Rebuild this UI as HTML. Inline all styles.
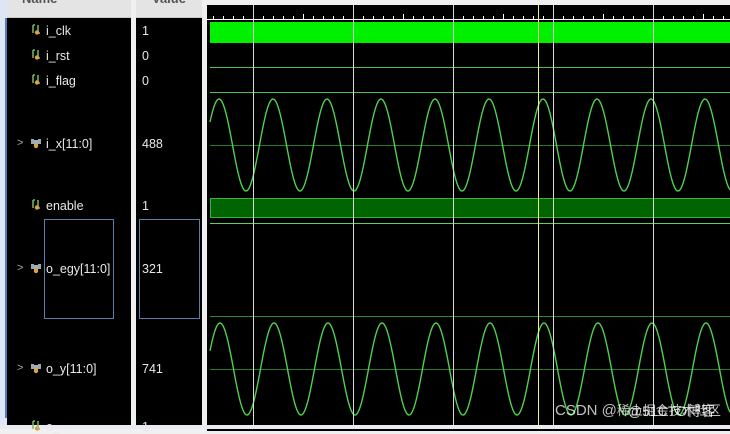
<!DOCTYPE html>
<html><head><meta charset="utf-8"><style>
body{margin:0;width:730px;height:429px;overflow:hidden;background:#f0f0f0;font-family:"Liberation Sans",sans-serif;position:relative}
.strip{position:absolute;left:0;top:0;width:7px;height:429px;background:#dde6f2}
.strip:after{content:"";position:absolute;left:5px;top:18px;width:2px;height:400px;background:#4f7cc0}
.col{position:absolute;top:0;height:426px;background:#000}
.hdr{position:absolute;top:0;height:17px;background:#e4e4e4;border-bottom:1px solid #c8c8c8;overflow:hidden}
.hdr span{position:absolute;top:-9px;font-size:13px;font-weight:bold;color:#555}
.t{position:absolute;color:#e8e8e8;font-size:12.5px;line-height:14px}
.ic{position:absolute;width:10px;height:11px}
.arr{position:absolute;color:#aaa;font-size:11px}
.box{position:absolute;border:1px solid #5a7fa6}
</style></head><body>
<div class="strip"></div>
<div class="col" style="left:7px;width:124px"></div>
<div class="hdr" style="left:7px;width:124px"><span style="left:15px">Name</span></div>
<div class="col" style="left:136px;width:66px"></div>
<div class="hdr" style="left:136px;width:66px"><span style="left:16px">Value</span></div>
<div class="col" style="left:207px;width:523px;top:5px"></div>
<div style="position:absolute;left:0;top:425px;width:730px;height:4px;background:#e8ecf2"></div>

<div id="names"></div>
<div class="box" style="left:44px;top:219px;width:68px;height:98px"></div>
<div class="box" style="left:139px;top:219px;width:59px;height:98px"></div>

<svg style="position:absolute;left:0;top:0" width="730" height="429" id="wv">
</svg>
<div style="position:absolute;left:555px;top:400px;font-size:15px;color:rgba(255,255,255,0.75)">CSDN @<span style="font-family:'Noto Sans CJK SC',sans-serif;font-size:13px">稀土掘金技术社区</span></div>
<div style="position:absolute;left:628px;top:401px;font-size:14px;color:rgba(255,255,255,0.8);font-family:'Liberation Sans','Noto Sans CJK SC',sans-serif">@51CTO博客</div>
<script>
var rows=[["i_clk","1",31,0],["i_rst","0",56,0],["i_flag","0",81,0],["i_x[11:0]","488",144,1],["enable","1",206,0],["o_egy[11:0]","321",269,1],["o_y[11:0]","741",369,1],["o_...","1",427,0]];
var h="";
rows.forEach(function(r){
 var y=r[2]-7;
 if(r[3]){h+='<div class="arr" style="left:17px;top:'+y+'px">&gt;</div><svg class="ic" style="left:31px;top:'+(y+1)+'px" viewBox="0 0 10 11"><rect x="0" y="1" width="3" height="5" fill="#9aa"/><rect x="7" y="1" width="3" height="5" fill="#9aa"/><rect x="3" y="2" width="4" height="6" fill="#aab"/><circle cx="5" cy="8" r="2.2" fill="#e0a040"/></svg>';}
 else{h+='<svg class="ic" style="left:32px;top:'+y+'px" viewBox="0 0 10 11"><path d="M1 1v8M1 1h2M6 1v8h2" stroke="#7cba5a" stroke-width="1.5" fill="none"/><circle cx="5" cy="8.5" r="2.2" fill="#e0a040"/></svg>';}
 h+='<div class="t" style="left:46px;top:'+y+'px">'+r[0]+'</div><div class="t" style="left:142px;top:'+y+'px">'+r[1]+'</div>';
});
document.getElementById('names').innerHTML=h;
var s="";
s+='<line x1="207" y1="19.5" x2="730" y2="19.5" stroke="#fff"/>';
for(var x=213;x<730;x+=10){s+='<line x1="'+x+'.5" y1="'+(((x-203)%50==0)?14:16)+'" x2="'+x+'.5" y2="19" stroke="#fff"/>';}
s+='<rect x="210" y="22" width="520" height="21" fill="#00f000"/>';
s+='<line x1="210" y1="67.5" x2="730" y2="67.5" stroke="#4fc04f"/><line x1="210" y1="92.5" x2="730" y2="92.5" stroke="#4fc04f"/>';
s+='<line x1="210" y1="145.5" x2="730" y2="145.5" stroke="#2a7a2a"/><line x1="210" y1="369.5" x2="730" y2="369.5" stroke="#2a7a2a"/>';
s+='<rect x="210.5" y="198.5" width="520" height="19" fill="#006400" stroke="#3cb03c"/>';
s+='<line x1="210" y1="223.5" x2="730" y2="223.5" stroke="#5fd05f"/><line x1="210" y1="316.5" x2="730" y2="316.5" stroke="#2f8a2f"/>';
function sine(c,p0){var pts=[];for(var x=210;x<=730;x+=1){pts.push(x+","+(c-46*Math.cos(2*Math.PI*(x-p0)/54)).toFixed(1));}return '<polyline points="'+pts.join(" ")+'" fill="none" stroke="#4fd04f" stroke-width="1.4"/>';}
s+=sine(145,219)+sine(369,220);
[253,353,453,553,653].forEach(function(x){s+='<line x1="'+x+'.5" y1="5" x2="'+x+'.5" y2="425" stroke="#d8d8d8"/>';});
s+='<line x1="538.5" y1="5" x2="538.5" y2="425" stroke="#f0f080"/>';
document.getElementById('wv').innerHTML=s;
</script>
</body></html>
